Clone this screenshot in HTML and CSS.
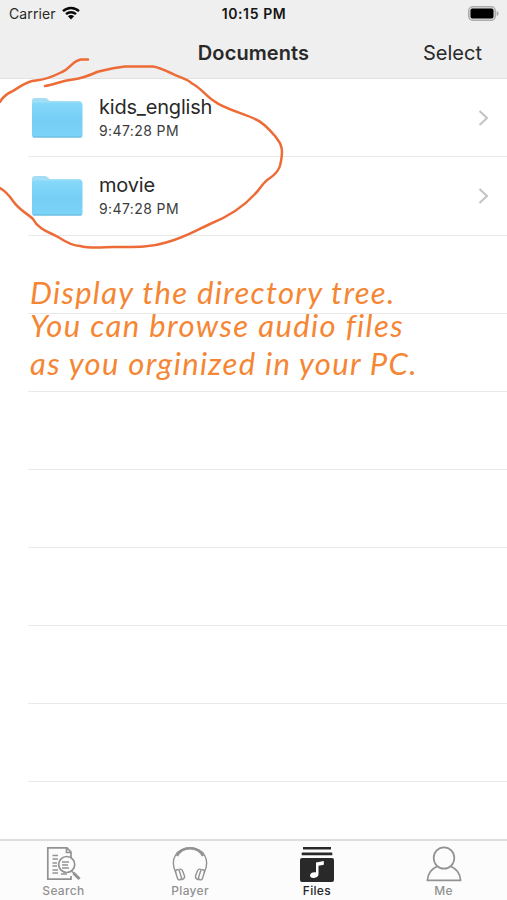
FILE: index.html
```html
<!DOCTYPE html>
<html lang="en">
<head>
<meta charset="utf-8">
<title>Documents</title>
<link rel="stylesheet" href="styles.css">
</head>
<body>
<div class="screen">
  <header class="header">
    <div class="status">
      <div class="carrier"><span>Carrier</span>
        <svg class="wifi" width="18" height="14" viewBox="0 0 18 14"><path d="M1 5.2C5.5.9 12.5.9 17 5.2M4 8.2C6.8 5.5 11.2 5.5 14 8.2" fill="none" stroke="#080808" stroke-width="2.4"/><path d="M9 13.4 5.9 10.2C7.6 8.7 10.4 8.7 12.1 10.2Z" fill="#080808"/></svg>
      </div>
      <span class="time">10:15 PM</span>
      <svg class="battery" width="31" height="15" viewBox="0 0 31 15"><rect x=".7" y=".7" width="26.6" height="13.6" rx="4" fill="#d5d5d5" stroke="#aaa" stroke-width="1.3"/><rect x="2.5" y="2.5" width="23" height="10" rx="2" fill="#000"/><path d="M28.6 5Q30.6 5.8 30.6 7.5T28.6 10Z" fill="#aaa"/></svg>
    </div>
    <nav class="navbar"><h1 class="title">Documents</h1><span class="select">Select</span></nav>
  </header>
  <main class="list">
    <div class="row">
      <svg class="folder" width="52" height="42" viewBox="0 0 52 42"><use href="#folder"/></svg>
      <div class="info"><span class="name">kids_english</span><span class="date">9:47:28 PM</span></div>
      <svg class="chevron" width="11" height="16" viewBox="0 0 11 16"><path d="M1.5 1 9 8 1.5 15"/></svg>
    </div>
    <div class="row">
      <svg class="folder" width="52" height="42" viewBox="0 0 52 42"><use href="#folder"/></svg>
      <div class="info"><span class="name">movie</span><span class="date">9:47:28 PM</span></div>
      <svg class="chevron" width="11" height="16" viewBox="0 0 11 16"><path d="M1.5 1 9 8 1.5 15"/></svg>
    </div>
    <div class="row"></div><div class="row"></div><div class="row"></div><div class="row"></div><div class="row"></div><div class="row"></div><div class="row"></div>
  </main>
  <footer class="tabs">
    <div class="tab">
      <svg width="36" height="36" viewBox="0 0 36 36" fill="none" stroke="#929292"><path d="M26 30V33.2H2.8V1.8H22L26 6V12M21.5 2V6.5H26" stroke-width="1.7"/><path d="M7.5 9.5H13M7.5 13H13M7.5 17H12M7.5 20H12M7.5 24H13M7.5 27H13M17 16H24M17 19H23M17 22H24M16 28H22" stroke-width="1.3"/><circle cx="21.7" cy="18.5" r="8" stroke-width="1.7"/><path d="M26.5 25 29 27.5" stroke-width="1.5"/><path d="M28.5 27.2 34.5 33" stroke-width="3"/></svg>
      <span>Search</span>
    </div>
    <div class="tab">
      <svg width="36" height="36" viewBox="0 0 36 36" fill="none" stroke="#929292"><path d="M4 27C-3 13 5 2 18 2S39 13 32 27" stroke-width="1.4"/><path d="M5 10C10-.5 26-.5 31 10" stroke-width="2.5"/><g id="cup" stroke-width="1.4"><rect x="4.5" y="23.5" width="4" height="10.5" rx="2" transform="rotate(-18 6.5 28.8)"/><path d="M7 23.3Q9.5 22.5 10.6 25L12.5 30Q13 32.8 9.5 33.7"/></g><use href="#cup" transform="matrix(-1 0 0 1 36 0)"/></svg>
      <span>Player</span>
    </div>
    <div class="tab active">
      <svg width="36" height="36" viewBox="0 0 36 36"><path d="M4 1H32V3.6H4ZM2.7 6.4H33.3V9.2H2.7Z" fill="#292929"/><rect x="1" y="12" width="34" height="24" rx="2" fill="#292929"/><path d="M17 16.5 24.8 15V18.7L19.5 19.8V28C19.5 30.5 17.7 31.7 15 31.9 12.5 32.1 10.8 31 11 29.2 11.3 27 14 25.8 17 26.4Z" fill="#fff"/></svg>
      <span>Files</span>
    </div>
    <div class="tab">
      <svg width="36" height="36" viewBox="0 0 36 36" fill="none" stroke="#929292" stroke-width="1.7"><ellipse cx="18" cy="12" rx="10.3" ry="10.7"/><path d="M11.5 20.3C5 23 1.8 27.5 1.4 34.3H34.6C34.2 27.5 31 23 24.5 20.3"/></svg>
      <span>Me</span>
    </div>
  </footer>
  <div class="note"><p class="line first">Display the directory tree.</p><p class="line second">You can browse audio files</p><p class="line third">as you orginized in your PC.</p></div>
  <svg class="scribble" width="507" height="260" viewBox="0 0 507 260"><path d="M88 59.5H81C72 61 71 68 62 72C52 77 44 80 36 80.5C26 81 20 87 12 91.5Q4 95 0 102M0 188Q7 192 13 201C20 211 27 213 33 219C38 229 49 232 58 237Q72 246 80 246C92 249 104 247 114 247C132 247 149 248 166 242.5C184 238 195 231 210 224C230 216 245 205 255 194C261 188 263 182 270 178C280 171 281 165 282 153C282 144 279 142 275 136Q263 122 255 119C243 113 224 109 214 101C206 96 201 88 192 83.5C186 78 180 78 172 73.5Q158 67 153 66.5H125C111 68 105 70 97 72Q84 78 73 79.5C60 81 54 85 45 86"/></svg>
</div>
<svg class="defs" width="0" height="0"><defs>
  <linearGradient id="blue" x1="0" y1="0" x2="0" y2="1"><stop offset="0" stop-color="#86d9fa"/><stop offset=".5" stop-color="#75cef5"/><stop offset="1" stop-color="#7dd3f8"/></linearGradient>
  <g id="folder"><path d="M1 8V4Q1 1 4 1H14Q16 1 17.5 3L19 4H48Q51 4 51 7V12H1Z" fill="#a2def4"/><rect x="1" y="5.5" width="50.5" height="35" rx="2" fill="url(#blue)"/><path d="M2 40H50.5" stroke="#65b5da" stroke-width="1"/></g>
</defs></svg>
</body>
</html>
```
FILE: styles.css
```css
* { box-sizing: border-box; }
body { margin: 0; font-family: Inter, sans-serif; color: #292929; background: #fff; }
.screen { position: relative; width: 507px; height: 900px; overflow: hidden; display: flex; flex-direction: column; }
.header { height: 79.4px; flex: none; background: #efefef; border-bottom: 1px solid #e2e2e2; }
.status { height: 27px; display: grid; grid-template-columns: 1fr auto 1fr; align-items: center; padding: 0 8px 0 9px; font-size: 14px; }
.carrier { display: flex; align-items: center; gap: 6px; letter-spacing: .1px; }
.wifi { margin-top: -1px; }
.time { font-weight: 600; letter-spacing: .6px; color: #151515; }
.battery { justify-self: end; }
.navbar { height: 51px; display: grid; grid-template-columns: 1fr auto 1fr; align-items: center; padding: 0 25px; }
.title { grid-column: 2; margin: 0; font-size: 20px; font-weight: 600; letter-spacing: .1px; }
.select { justify-self: end; font-size: 20px; }
.list { flex: 1; }
.row { height: 78.1px; margin-left: 28px; border-bottom: 1px solid #e9e9e9; display: flex; align-items: center; padding: 0 18px 0 3px; }
.info { flex: 1; margin-left: 16px; display: flex; flex-direction: column; }
.name { font-size: 20px; line-height: 26px; letter-spacing: -.2px; }
.date { font-size: 14px; line-height: 22px; letter-spacing: .4px; color: #3c3c3c; }
.chevron path { fill: none; stroke: #c2c2c2; stroke-width: 2; }
.tabs { height: 61px; flex: none; display: grid; grid-template-columns: repeat(4, 1fr); background: #fcfcfc; border-top: 2px solid #dedede; }
.tab { display: flex; flex-direction: column; align-items: center; padding-top: 5px; color: #929292; font-size: 12px; font-weight: 500; line-height: 17px; letter-spacing: .3px; }
.tab svg { flex: none; }
.active { color: #292929; }
.note { position: absolute; left: 30px; top: 274px; color: #f58634; font: italic 31px Lato, sans-serif; font-variant-ligatures: none; }
.line { margin: 0; line-height: 36px; white-space: nowrap; letter-spacing: 1.32px; }
.second { margin-top: -3px; letter-spacing: 1.4px; }
.third { margin-top: 2px; }
.scribble { position: absolute; left: 0; top: 0; fill: none; stroke: #ed6b36; stroke-width: 2.5; stroke-linecap: round; pointer-events: none; }
.defs { position: absolute; }
```
